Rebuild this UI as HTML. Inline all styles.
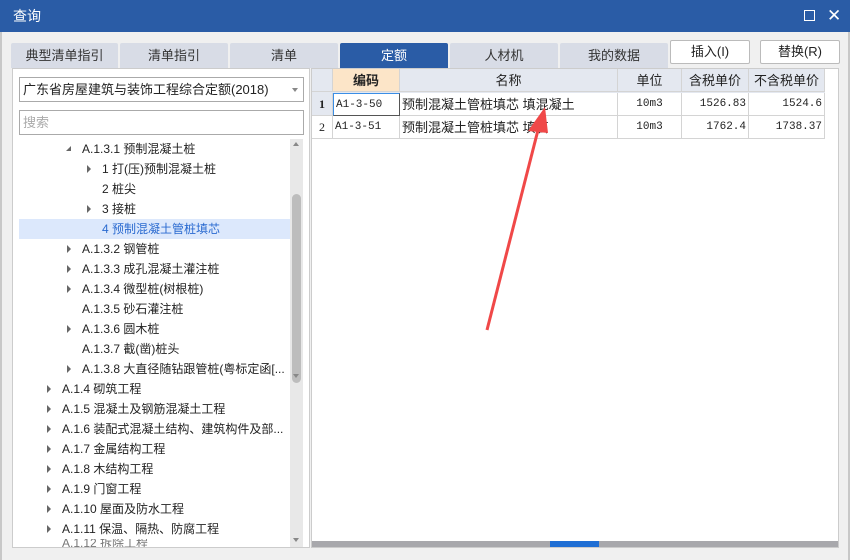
<!DOCTYPE html>
<html><head><meta charset="utf-8"><style>
*{margin:0;padding:0;box-sizing:border-box}
body{width:850px;height:560px;overflow:hidden;background:#f0f0f0;font-family:"Liberation Sans","Noto Sans CJK SC",sans-serif;font-size:12px;color:#222;position:relative}
.a{position:absolute}
.title{left:0;top:0;width:850px;height:32px;background:#2a5ca6;color:#fff;font-size:14px;line-height:32px;padding-left:13px}
.tab{top:43px;height:25px;background:#d8dce6;text-align:center;line-height:25px;font-size:13px;color:#333;border-radius:2px 2px 0 0}
.btn{top:40px;height:24px;background:#fff;border:1px solid #bbb;border-radius:2px;text-align:center;line-height:22px;font-size:13px}
.tr{left:19px;width:271px;height:20px;line-height:20px;font-size:12px;white-space:nowrap}
.arr{position:absolute;top:6px;width:0;height:0;border-top:4px solid transparent;border-bottom:4px solid transparent;border-left:4px solid #666}
.c{position:absolute;height:23px;line-height:23px;border-right:1px solid #d4d4d4;border-bottom:1px solid #d4d4d4;overflow:hidden;white-space:nowrap}
.m{font-family:"Liberation Mono","Noto Sans CJK SC",monospace;font-size:11px}
</style></head><body>
<div class="a title">查询<span style="position:absolute;left:804px;top:10px;width:11px;height:11px;border:1.5px solid #fff"></span><span style="position:absolute;left:827px;top:0;font-size:17px">✕</span></div>
<div class="a" style="left:0;top:32px;width:2px;height:528px;background:#c8c8c8"></div>
<div class="a" style="left:848px;top:32px;width:2px;height:528px;background:#c8c8c8"></div>
<div class="a tab" style="left:11px;width:107px">典型清单指引</div>
<div class="a tab" style="left:120px;width:108px">清单指引</div>
<div class="a tab" style="left:230px;width:108px">清单</div>
<div class="a tab" style="left:340px;width:108px;background:#2a5ca6;color:#fff">定额</div>
<div class="a tab" style="left:450px;width:108px">人材机</div>
<div class="a tab" style="left:560px;width:108px">我的数据</div>
<div class="a btn" style="left:670px;width:80px">插入(I)</div>
<div class="a btn" style="left:760px;width:80px">替换(R)</div>
<!-- left panel -->
<div class="a" style="left:12px;top:68px;width:298px;height:480px;background:#fff;border:1px solid #ccc"></div>
<div class="a" style="left:19px;top:77px;width:285px;height:25px;border:1px solid #aaa;line-height:23px;padding-left:3px;font-size:13px">广东省房屋建筑与装饰工程综合定额(2018)<span style="position:absolute;right:5px;top:10px;border-left:3px solid transparent;border-right:3px solid transparent;border-top:4px solid #888"></span></div>
<div class="a" style="left:19px;top:110px;width:285px;height:25px;border:1px solid #aaa;line-height:23px;padding-left:3px;font-size:13px;color:#aaa">搜索</div>
<div class="a" style="left:290px;top:139px;width:13px;height:245px;background:#e8e8e8"></div>
<div class="a" style="left:292px;top:194px;width:9px;height:189px;background:#bdbdbd;border-radius:5px"></div>
<div class="a" style="left:293px;top:142px;border-left:3.5px solid transparent;border-right:3.5px solid transparent;border-bottom:4px solid #888"></div>
<div class="a" style="left:293px;top:374px;border-left:3.5px solid transparent;border-right:3.5px solid transparent;border-top:4px solid #888"></div>
<div class="a" style="left:290px;top:384px;width:13px;height:163px;background:#e8e8e8"></div>
<div class="a" style="left:293px;top:538px;border-left:3.5px solid transparent;border-right:3.5px solid transparent;border-top:4px solid #888"></div>

<div class="a tr" style="top:139px;padding-left:63px"><span class="arr" style="left:47px;top:7px;border:0;width:0;height:0;border-left:5px solid transparent;border-bottom:5px solid #666"></span>A.1.3.1 预制混凝土桩</div>
<div class="a tr" style="top:159px;padding-left:83px"><span class="arr" style="left:68px"></span>1 打(压)预制混凝土桩</div>
<div class="a tr" style="top:179px;padding-left:83px">2 桩尖</div>
<div class="a tr" style="top:199px;padding-left:83px"><span class="arr" style="left:68px"></span>3 接桩</div>
<div class="a tr" style="top:219px;padding-left:83px;background:#dce8fc;color:#2a6ad0">4 预制混凝土管桩填芯</div>
<div class="a tr" style="top:239px;padding-left:63px"><span class="arr" style="left:48px"></span>A.1.3.2 钢管桩</div>
<div class="a tr" style="top:259px;padding-left:63px"><span class="arr" style="left:48px"></span>A.1.3.3 成孔混凝土灌注桩</div>
<div class="a tr" style="top:279px;padding-left:63px"><span class="arr" style="left:48px"></span>A.1.3.4 微型桩(树根桩)</div>
<div class="a tr" style="top:299px;padding-left:63px">A.1.3.5 砂石灌注桩</div>
<div class="a tr" style="top:319px;padding-left:63px"><span class="arr" style="left:48px"></span>A.1.3.6 圆木桩</div>
<div class="a tr" style="top:339px;padding-left:63px">A.1.3.7 截(凿)桩头</div>
<div class="a tr" style="top:359px;padding-left:63px"><span class="arr" style="left:48px"></span>A.1.3.8 大直径随钻跟管桩(粤标定函[...</div>
<div class="a tr" style="top:379px;padding-left:43px"><span class="arr" style="left:28px"></span>A.1.4 砌筑工程</div>
<div class="a tr" style="top:399px;padding-left:43px"><span class="arr" style="left:28px"></span>A.1.5 混凝土及钢筋混凝土工程</div>
<div class="a tr" style="top:419px;padding-left:43px"><span class="arr" style="left:28px"></span>A.1.6 装配式混凝土结构、建筑构件及部...</div>
<div class="a tr" style="top:439px;padding-left:43px"><span class="arr" style="left:28px"></span>A.1.7 金属结构工程</div>
<div class="a tr" style="top:459px;padding-left:43px"><span class="arr" style="left:28px"></span>A.1.8 木结构工程</div>
<div class="a tr" style="top:479px;padding-left:43px"><span class="arr" style="left:28px"></span>A.1.9 门窗工程</div>
<div class="a tr" style="top:499px;padding-left:43px"><span class="arr" style="left:28px"></span>A.1.10 屋面及防水工程</div>
<div class="a tr" style="top:519px;padding-left:43px"><span class="arr" style="left:28px"></span>A.1.11 保温、隔热、防腐工程</div>
<div class="a tr" style="top:539px;height:8px;overflow:hidden;padding-left:43px;line-height:8px;color:#777">A.1.12 拆除工程</div>
<!-- right panel -->
<div class="a" style="left:311px;top:68px;width:528px;height:480px;background:#fff;border:1px solid #ccc"></div>
<div class="a" style="left:312px;top:69px;width:513px;height:24px;background:#e4e8f0"></div>
<div class="c" style="left:312px;top:69px;width:21px;background:#e4e8f0"></div>
<div class="c" style="left:333px;top:69px;width:67px;background:#fce5c8;text-align:center;font-weight:bold;font-size:13px">编码</div>
<div class="c" style="left:400px;top:69px;width:218px;text-align:center;font-size:13px">名称</div>
<div class="c" style="left:618px;top:69px;width:64px;text-align:center;font-size:13px">单位</div>
<div class="c" style="left:682px;top:69px;width:67px;text-align:center;font-size:13px">含税单价</div>
<div class="c" style="left:749px;top:69px;width:76px;text-align:center;font-size:13px">不含税单价</div>

<div class="c" style="left:312px;top:93px;width:21px;background:#e4e8f0;text-align:center;font-weight:bold;font-family:'Liberation Serif',serif">1</div>
<div class="c m" style="left:333px;top:93px;width:67px;padding-left:2px;border:1px solid #555;border-left:1px solid #3a8ee6;border-top:1px solid #3a8ee6">A1-3-50</div>
<div class="c" style="left:400px;top:93px;width:218px;padding-left:2px;font-size:13px">预制混凝土管桩填芯 填混凝土</div>
<div class="c m" style="left:618px;top:93px;width:64px;text-align:center">10m3</div>
<div class="c m" style="left:682px;top:93px;width:67px;text-align:right;padding-right:2px">1526.83</div>
<div class="c m" style="left:749px;top:93px;width:76px;text-align:right;padding-right:2px">1524.6</div>

<div class="c" style="left:312px;top:116px;width:21px;text-align:center;font-family:'Liberation Serif',serif">2</div>
<div class="c m" style="left:333px;top:116px;width:67px;padding-left:2px">A1-3-51</div>
<div class="c" style="left:400px;top:116px;width:218px;padding-left:2px;font-size:13px">预制混凝土管桩填芯 填石</div>
<div class="c m" style="left:618px;top:116px;width:64px;text-align:center">10m3</div>
<div class="c m" style="left:682px;top:116px;width:67px;text-align:right;padding-right:2px">1762.4</div>
<div class="c m" style="left:749px;top:116px;width:76px;text-align:right;padding-right:2px">1738.37</div>

<div class="a" style="left:312px;top:541px;width:526px;height:6px;background:#a8a8ac"></div>
<div class="a" style="left:550px;top:541px;width:49px;height:6px;background:#1f6ed4"></div>
<svg class="a" style="left:0;top:0" width="850" height="560"><path d="M487 330 L538 130" stroke="#f04848" stroke-width="3" fill="none"/><path d="M545 107 L528 131 L548 133 Z" fill="#f04848"/></svg>
</body></html>
